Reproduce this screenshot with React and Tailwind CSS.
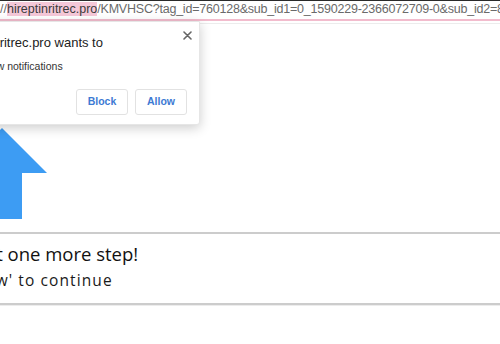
import React from 'react'

function AddressBar() {
  return (
    <div className="shrink-0">
      <div className="h-px bg-[#2a2a2a]" />
      <div
        className="h-[18px] whitespace-nowrap overflow-hidden text-[12.5px] leading-[17px] text-[#6a6a6a]"
        style={{ fontFamily: '"Liberation Sans", Arial, sans-serif' }}
      >
        //<span className="bg-[#f5c8d8] text-[#3a3a3a]">hireptinritrec.pro</span>
        <span className="tracking-[-0.22px]">/KMVHSC?tag_id=760128&amp;sub_id1=0_1590229-2366072709-0&amp;sub_id2=8</span>
      </div>
      <div className="h-[2px] bg-[#f2bccd]" />
      <div className="h-[2px] bg-white" />
      <div className="h-px bg-[#ececec]" />
    </div>
  )
}

function UpArrow() {
  return (
    <svg width="90" height="91" viewBox="0 0 90 91" className="ml-[-43px] mt-[104px] block shrink-0">
      <path d="M45 0 L90 45 L65 45 L65 91 L25 91 L25 45 L0 45 Z" fill="#3d9cf3" />
    </svg>
  )
}

function PermissionPopup() {
  return (
    <div
      className="absolute left-[-60px] top-[21px] w-[260px] h-[104px] bg-white rounded-br-[3px] shadow-[0_3px_12px_rgba(0,0,0,0.2)] border border-[#e6e6e6]"
      style={{ fontFamily: '"Liberation Sans", Arial, sans-serif' }}
    >
      <button className="absolute right-[7px] top-[8px] w-[10px] h-[10px] flex items-center justify-center">
        <svg width="9" height="9" viewBox="0 0 9 9">
          <path d="M1 1 L8 8 M8 1 L1 8" stroke="#666" strokeWidth="1.6" strokeLinecap="round" />
        </svg>
      </button>
      <div className="pl-[16px] pt-[13px] text-[13px] leading-[16px] text-[#222] whitespace-nowrap">
        hireptinritrec.pro wants to
      </div>
      <div className="pl-[37px] pt-[8px] text-[10.5px] leading-[14px] text-[#333] whitespace-nowrap">
        Show notifications
      </div>
      <div className="flex justify-end gap-[7px] pr-[12px] mt-[16px]">
        <button className="w-[52px] h-[26px] rounded-[3px] border border-[#e2e2e2] text-[10.5px] font-bold text-[#3d7ad3]">
          Block
        </button>
        <button className="w-[52px] h-[26px] rounded-[3px] border border-[#e2e2e2] text-[10.5px] font-bold text-[#3d7ad3]">
          Allow
        </button>
      </div>
    </div>
  )
}

export default function App() {
  return (
    <div className="relative w-[500px] h-[344px] overflow-hidden bg-white flex flex-col">
      <AddressBar />
      <UpArrow />
      <div
        className="mt-[13px] h-[73px] border-y-2 border-[#cccccc] shadow-[0_1px_0_#ececec] pt-[7px]"
        style={{ fontFamily: '"Open Sans", sans-serif' }}
      >
        <div className="ml-[-29px] text-[18.5px] leading-[25px] font-medium text-[#111] whitespace-nowrap">
          Just one more step!
        </div>
        <div className="ml-[-84px] mt-[3px] text-[15.5px] leading-[22px] tracking-[1.1px] text-[#1a1a1a] whitespace-nowrap">
          Click 'Allow' to continue
        </div>
      </div>
      <PermissionPopup />
    </div>
  )
}
